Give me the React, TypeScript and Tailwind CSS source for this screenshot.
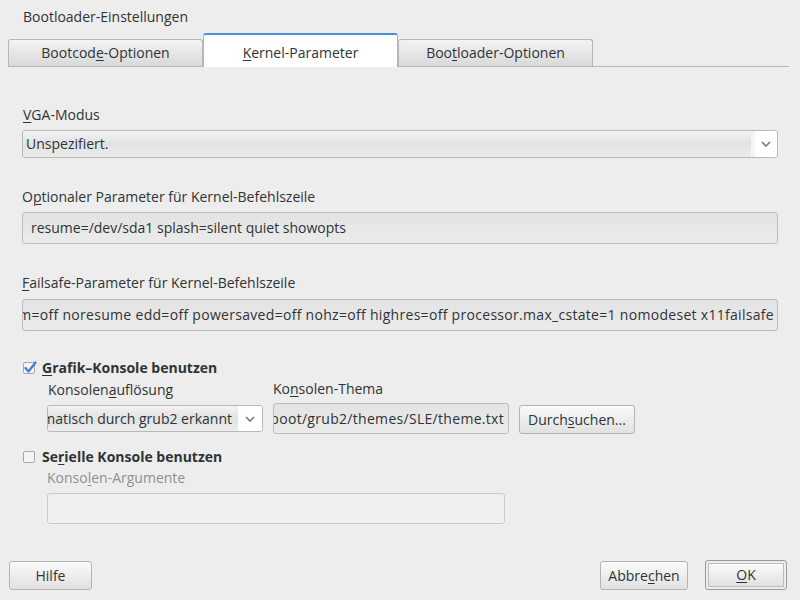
import React from 'react';

const font = { fontFamily: '"Open Sans", "Noto Sans", sans-serif' };

const U = ({ children }: { children: React.ReactNode }) => (
  <span className="underline underline-offset-2 decoration-1">{children}</span>
);

const Tab = ({ children, active }: { children: React.ReactNode; active?: boolean }) =>
  active ? (
    <div className="w-[195px] h-[34px] -mb-px bg-white border border-b-0 border-[#b6b6b6] border-t-2 border-t-[#4a90d9] rounded-t-[3px] flex items-center justify-center pt-[3px]">
      {children}
    </div>
  ) : (
    <div className="w-[195px] h-[27px] bg-gradient-to-b from-[#f3f3f3] to-[#d9d9d9] border border-b-0 border-[#b6b6b6] rounded-t-[3px] flex items-center justify-center">
      {children}
    </div>
  );

const Chevron = () => (
  <svg width="10" height="6" viewBox="0 0 10 6" className="text-[#777]">
    <path d="M1 1 L5 5 L9 1" fill="none" stroke="currentColor" strokeWidth="1.6" />
  </svg>
);

const Button = ({ children, w }: { children: React.ReactNode; w: string }) => (
  <div className={`${w} h-[29px] rounded-[3px] border border-[#b3b3b3] bg-gradient-to-b from-[#fafafa] to-[#e1e1e1] flex items-center justify-center`}>
    {children}
  </div>
);

const App = () => {
  return (
    <div className="w-[800px] h-[600px] bg-[#ededed] text-[#2e3436] text-[14px] leading-[18px] flex flex-col" style={font}>
      <div className="pt-[8px] pl-[23px] h-[26px]">Bootloader-Einstellungen</div>

      {/* Tabs */}
      <div className="mt-[7px] ml-[8px] mr-[11px] h-[34px] flex items-end border-b border-[#b6b6b6]">
        <Tab>Bootcod<U>e</U>-Optionen</Tab>
        <Tab active><U>K</U>ernel-Parameter</Tab>
        <Tab>Boo<U>t</U>loader-Optionen</Tab>
      </div>

      <div className="px-[22px] flex flex-col">
        <div className="mt-[39px] pl-[1px]"><U>V</U>GA-Modus</div>
        <div className="mt-[6px] h-[28px] flex rounded-[3px] border border-[#b9b9b9] overflow-hidden">
          <div className="flex-1 bg-gradient-to-b from-[#f3f3f3] via-[#e2e2e2] to-[#ececec] flex items-center pl-[3px] border-r-[4px] border-[#f4f4f4]">
            Unspezifiert.
          </div>
          <div className="w-[22px] bg-white flex items-center justify-center">
            <Chevron />
          </div>
        </div>

        <div className="mt-[30px]">O<U>p</U>tionaler Parameter für Kernel-Befehlszeile</div>
        <div className="mt-[6px] h-[32px] rounded-[3px] border border-[#bdbdbd] bg-gradient-to-b from-[#e3e3e3] to-[#ebebeb] flex items-center pl-[8px] whitespace-nowrap">
          resume=/dev/sda1 splash=silent quiet showopts
        </div>

        <div className="mt-[30px]"><U>F</U>ailsafe-Parameter für Kernel-Befehlszeile</div>
        <div className="mt-[7px] h-[32px] rounded-[3px] border border-[#bdbdbd] bg-gradient-to-b from-[#e3e3e3] to-[#ebebeb] flex items-center justify-end pr-[3px] whitespace-nowrap overflow-hidden">
          <span className="shrink-0 tracking-[0.3px]">ide=nodma apm=off noresume edd=off powersaved=off nohz=off highres=off processor.max_cstate=1 nomodeset x11failsafe</span>
        </div>

        <div className="mt-[28px] flex items-center gap-[5px] font-bold">
          <svg width="14" height="14" viewBox="0 0 14 14" className="ml-[1px]">
            <rect x="0.5" y="1.5" width="11" height="11" rx="1.5" fill="#f4f4f4" stroke="#a8a8a8" />
            <path d="M2.5 7 L5.5 10.5 L12.5 1.5" fill="none" stroke="#3d7fd0" strokeWidth="2.2" strokeLinecap="round" strokeLinejoin="round" />
          </svg>
          <span><U>G</U>rafik–Konsole benutzen</span>
        </div>

        <div className="pl-[25px] flex gap-[10px]">
          <div className="w-[216px] flex flex-col">
            <div className="mt-[4px] pl-[1px]">Konsolen<U>a</U>uflösung</div>
            <div className="mt-[6px] h-[27px] flex rounded-[3px] border border-[#b9b9b9] overflow-hidden">
              <div className="flex-1 bg-gradient-to-b from-[#f3f3f3] via-[#e2e2e2] to-[#ececec] flex items-center justify-end pr-[6px] whitespace-nowrap overflow-hidden">
                <span className="shrink-0">Automatisch durch grub2 erkannt</span>
              </div>
              <div className="w-[24px] bg-white flex items-center justify-center">
                <Chevron />
              </div>
            </div>
          </div>
          <div className="w-[236px] flex flex-col">
            <div className="mt-[3px]">Ko<U>n</U>solen-Thema</div>
            <div className="mt-[5px] h-[31px] rounded-[3px] border border-[#bdbdbd] bg-gradient-to-b from-[#e3e3e3] to-[#ebebeb] flex items-center justify-end pr-[4px] whitespace-nowrap overflow-hidden">
              <span className="shrink-0 tracking-[0.3px]">/boot/grub2/themes/SLE/theme.txt</span>
            </div>
          </div>
          <div className="flex flex-col justify-end">
            <Button w="w-[116px]">Durch<U>s</U>uchen...</Button>
          </div>
        </div>

        <div className="mt-[14px] flex items-center gap-[5px] font-bold">
          <svg width="14" height="14" viewBox="0 0 14 14" className="ml-[1px]">
            <rect x="0.5" y="1.5" width="11" height="11" rx="1.5" fill="#f4f4f4" stroke="#a8a8a8" />
          </svg>
          <span>Se<U>r</U>ielle Konsole benutzen</span>
        </div>

        <div className="pl-[25px] flex flex-col">
          <div className="mt-[3px] text-[#8d9091]">Konso<U>l</U>en-Argumente</div>
          <div className="mt-[6px] w-[458px] h-[31px] rounded-[3px] border border-[#cbcbcb] bg-[#f0f0f0]" />
        </div>
      </div>

      <div className="mt-auto pb-[10px] flex items-end px-[9px]">
        <Button w="w-[83px]">Hilfe</Button>
        <div className="flex-1" />
        <Button w="w-[88px]">Abbre<U>c</U>hen</Button>
        <div className="ml-[17px] w-[82px] h-[30px] rounded-[3px] border border-[#9a9a9a] p-[2px]">
          <div className="w-full h-full border border-[#bdbdbd] bg-gradient-to-b from-[#fafafa] to-[#e1e1e1] flex items-center justify-center">
            <U>O</U>K
          </div>
        </div>
        <div className="w-[4px]" />
      </div>
    </div>
  );
};

export default App;
